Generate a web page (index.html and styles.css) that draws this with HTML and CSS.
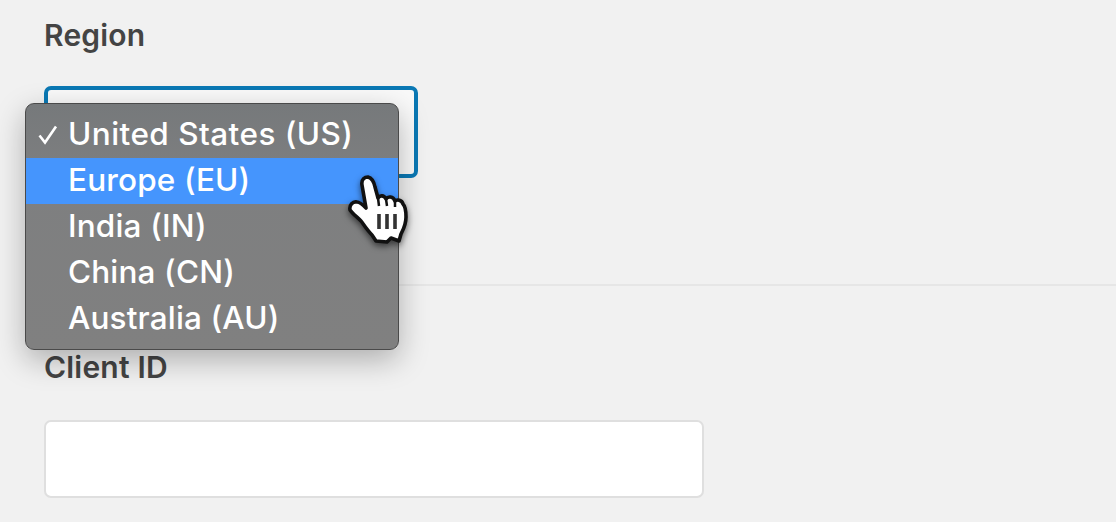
FILE: index.html
```html
<!DOCTYPE html>
<html lang="en">
<head>
<meta charset="utf-8">
<title>Region</title>
<link rel="stylesheet" href="styles.css">
</head>
<body>
<main class="form">
  <section class="field field-region">
    <label class="label">Region</label>
    <div class="select-box"></div>
  </section>
  <hr class="divider">
  <section class="field field-client">
    <label class="label">Client ID</label>
    <div class="text-input"></div>
  </section>
</main>
<ul class="menu">
  <li class="option is-checked"><svg class="check" viewBox="0 0 20 20" width="20" height="20" aria-hidden="true"><path d="M1.5 10.5L7 17.5L18 1.5" fill="none" stroke="#fff" stroke-width="2.6"/></svg>United States (US)</li>
  <li class="option is-active">Europe (EU)</li>
  <li class="option">India (IN)</li>
  <li class="option">China (CN)</li>
  <li class="option">Australia (AU)</li>
</ul>
<svg class="cursor" viewBox="0 0 70 75" width="70" height="75" aria-hidden="true">
  <path d="M17 13C16 7 20 5 23 5C27 6 29 10 30 15L33 26C35 23 39 23 41 27C43 24 48 24 50 29C52 27 57 28 58 32C61 35 61 40 61 45C61 53 58 58 56 62L54 69L46 66L42 70L31 69L27 63C22 58 19 53 16 49C12 45 7 41 5 38C4 33 8 29 12 30C15 30 18 33 21 36Z" fill="#fff" stroke="#111" stroke-width="3.6" stroke-linejoin="round"/>
  <path d="M33 26L34 34M41 27L42 34M50 29L50 35" fill="none" stroke="#111" stroke-width="2.5"/>
  <path d="M34 42V57M42 42V57M50 42V57" fill="none" stroke="#333" stroke-width="3.6"/>
</svg>
</body>
</html>
```
FILE: styles.css
```css
html, body {
  margin: 0;
  padding: 0;
  height: 522px;
  overflow: hidden;
  background: #f1f1f1;
}

body {
  position: relative;
  font-family: Inter, "Liberation Sans", sans-serif;
}

.form {
  display: flex;
  flex-direction: column;
  padding: 19px 0 0 44px;
}

.field {
  display: flex;
  flex-direction: column;
}

.label {
  font-size: 30px;
  line-height: 32px;
  font-weight: 600;
  color: #444;
  letter-spacing: 0.2px;
}

.select-box {
  box-sizing: border-box;
  width: 374px;
  height: 92px;
  margin-top: 35px;
  border: 4px solid #0a78b4;
  border-radius: 7px;
  background: #f9f9f9;
}

.divider {
  height: 2px;
  margin: 106px 0 0 0;
  border: 0;
  background: #e6e6e6;
}

.field-client {
  margin-top: 65px;
}

.text-input {
  box-sizing: border-box;
  width: 660px;
  height: 78px;
  margin-top: 37px;
  border: 2px solid #dfdfdf;
  border-radius: 7px;
  background: #fff;
}

.menu {
  position: absolute;
  left: 25px;
  top: 103px;
  box-sizing: border-box;
  width: 374px;
  height: 247px;
  margin: 0;
  padding: 8px 0 0;
  list-style: none;
  border: 1px solid #4a4a4a;
  border-radius: 9px;
  background: linear-gradient(#76797b, #7e7f80 30%, #808080);
  box-shadow: 0 10px 30px rgba(0, 0, 0, 0.28);
  color: #fff;
  font-size: 31.5px;
  font-weight: 500;
  letter-spacing: 0.15px;
}

.option {
  position: relative;
  height: 46px;
  line-height: 44px;
  padding-left: 42px;
  white-space: nowrap;
}

.option.is-checked {
  letter-spacing: 0.45px;
}

.option.is-active {
  background: #4595fd;
}

.check {
  position: absolute;
  left: 12px;
  top: 13px;
}

.cursor {
  position: absolute;
  left: 345px;
  top: 172px;
  filter: drop-shadow(0 3px 3px rgba(0, 0, 0, 0.55));
}
```
